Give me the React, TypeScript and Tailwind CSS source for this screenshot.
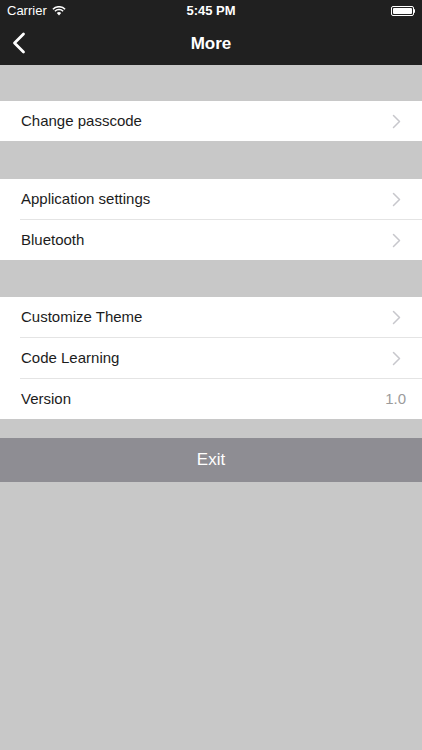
import React from "react";

function Chevron() {
  return (
    <svg width="9" height="15" viewBox="0 0 9 15" fill="none" className="shrink-0">
      <path d="M1.5 1.5 L7.5 7.5 L1.5 13.5" stroke="#c7c7cc" strokeWidth="1.5" strokeLinecap="round" strokeLinejoin="round" />
    </svg>
  );
}

function Row({ label, value, last }: { label: string; value?: string; last?: boolean }) {
  return (
    <div className="bg-white">
      <div className={`h-[40px] flex items-center justify-between pl-[21px] ${value ? "pr-[16px]" : "pr-[21px]"}`}>
        <span className="text-[15px] text-[#1c1c1c]">{label}</span>
        {value ? <span className="text-[15px] text-[#9b9b9b]">{value}</span> : <Chevron />}
      </div>
      {!last && <div className="ml-[20px] h-px bg-[#e4e4e4]" />}
    </div>
  );
}

export default function App() {
  return (
    <div className="w-[422px] h-[750px] bg-[#c8c8c8] flex flex-col" style={{ fontFamily: "'Helvetica Neue', 'Liberation Sans', Arial, sans-serif" }}>
      <div className="bg-[#202020] text-white">
        <div className="h-[22px] flex items-center justify-between px-[7px] relative">
          <div className="flex items-center gap-[5px] text-[13px]">
            <span>Carrier</span>
            <svg width="14" height="10" viewBox="0 0 14 10">
              <path d="M7 9.5 L4.8 7.1 A3.2 3.2 0 0 1 9.2 7.1 Z" fill="white" />
              <path d="M2.9 5.2 A5.9 5.9 0 0 1 11.1 5.2" stroke="white" strokeWidth="1.5" fill="none" />
              <path d="M0.9 3.2 A8.7 8.7 0 0 1 13.1 3.2" stroke="white" strokeWidth="1.5" fill="none" />
            </svg>
          </div>
          <span className="absolute left-1/2 -translate-x-1/2 text-[13px] font-semibold">5:45 PM</span>
          <div className="flex items-center">
            <div className="w-[23px] h-[10px] border border-white rounded-[2px] p-px">
              <div className="w-full h-full bg-white rounded-[1px]" />
            </div>
            <div className="w-[1.5px] h-[4px] bg-white rounded-r" />
          </div>
        </div>
        <div className="h-[43px] flex items-center justify-center relative">
          <svg width="14" height="22" viewBox="0 0 14 22" className="absolute left-[12px] top-[10px]">
            <path d="M11.5 2 L2.5 11 L11.5 20" stroke="white" strokeWidth="2.8" fill="none" strokeLinecap="round" strokeLinejoin="round" />
          </svg>
          <span className="text-[17px] font-bold">More</span>
        </div>
      </div>
      <div className="h-[36px]" />
      <Row label="Change passcode" last />
      <div className="h-[38px]" />
      <Row label="Application settings" />
      <Row label="Bluetooth" last />
      <div className="h-[37px]" />
      <Row label="Customize Theme" />
      <Row label="Code Learning" />
      <Row label="Version" value="1.0" last />
      <div className="h-[19px]" />
      <div className="h-[44px] bg-[#8e8d93] flex items-center justify-center text-white text-[17px]">Exit</div>
    </div>
  );
}
